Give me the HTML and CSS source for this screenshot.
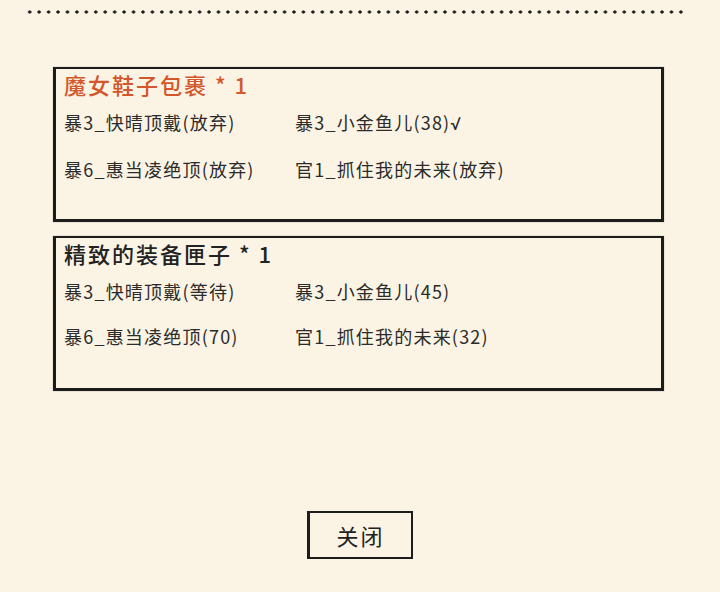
FILE: index.html
```html
<!DOCTYPE html>
<html lang="zh">
<head>
  <meta charset="UTF-8">
  <title>装备包裹</title>
  <link rel="stylesheet" href="styles.css">
</head>
<body>
  <div class="dots"></div>

  <div class="packs">
    <div class="pack">
      <div class="pack-title highlight">魔女鞋子包裹 * 1</div>
      <div class="pack-items">
        <span>暴3_快晴顶戴(放弃)</span>
        <span>暴3_小金鱼儿(38)<span class="tick">√</span></span>
        <span>暴6_惠当凌绝顶(放弃)</span>
        <span>官1_抓住我的未来(放弃)</span>
      </div>
    </div>

    <div class="pack">
      <div class="pack-title">精致的装备匣子 * 1</div>
      <div class="pack-items">
        <span>暴3_快晴顶戴(等待)</span>
        <span>暴3_小金鱼儿(45)</span>
        <span>暴6_惠当凌绝顶(70)</span>
        <span>官1_抓住我的未来(32)</span>
      </div>
    </div>
  </div>

  <div class="actions">
    <button class="close-btn">关闭</button>
  </div>
</body>
</html>
```

FILE: styles.css
```css
body {
  margin: 0;
  background: #fbf4e4;
  color: #2b2b2b;
  font-family: "Noto Sans CJK SC", "Noto Sans", sans-serif;
  width: 720px;
  height: 592px;
  overflow: hidden;
}

/* dotted rule along the top */
.dots {
  margin: 10px 36px 0 25px;
  height: 4px;
  background-image: radial-gradient(circle, #1a1a1a 1.4px, transparent 1.8px);
  background-size: 9.45px 4px;
  background-repeat: repeat-x;
}

.packs {
  padding: 53px 0 0 53px;
}

/* hand-drawn style box */
.pack {
  box-sizing: border-box;
  width: 611px;
  height: 155px;
  border: 2px solid #1c1c1c;
  border-left-width: 3px;
  border-right-width: 3px;
  border-bottom-width: 3px;
  padding: 0 0 0 8px;
  margin-bottom: 14px;
  box-shadow: 0 0 1px rgba(0,0,0,0.4);
}

.pack-title {
  font-size: 22px;
  line-height: 30px;
  letter-spacing: 2px;
  font-weight: 500;
  color: #222;
  margin-bottom: 10px;
}

.pack-title.highlight {
  color: #d3572b;
}

.pack-items {
  display: grid;
  grid-template-columns: 231px 1fr;
  row-gap: 19px;
  font-size: 18px;
  line-height: 26px;
  letter-spacing: 1.2px;
}

.tick {
  font-family: Roboto, "Open Sans", sans-serif;
}

.actions {
  display: flex;
  justify-content: center;
  padding-top: 106px;
}

.close-btn {
  width: 106px;
  height: 48px;
  background: transparent;
  border: 2px solid #1c1c1c;
  border-left-width: 3px;
  font-family: "Noto Sans CJK SC", sans-serif;
  font-size: 22px;
  letter-spacing: 2px;
  color: #222;
  padding: 0;
  cursor: pointer;
}
```
